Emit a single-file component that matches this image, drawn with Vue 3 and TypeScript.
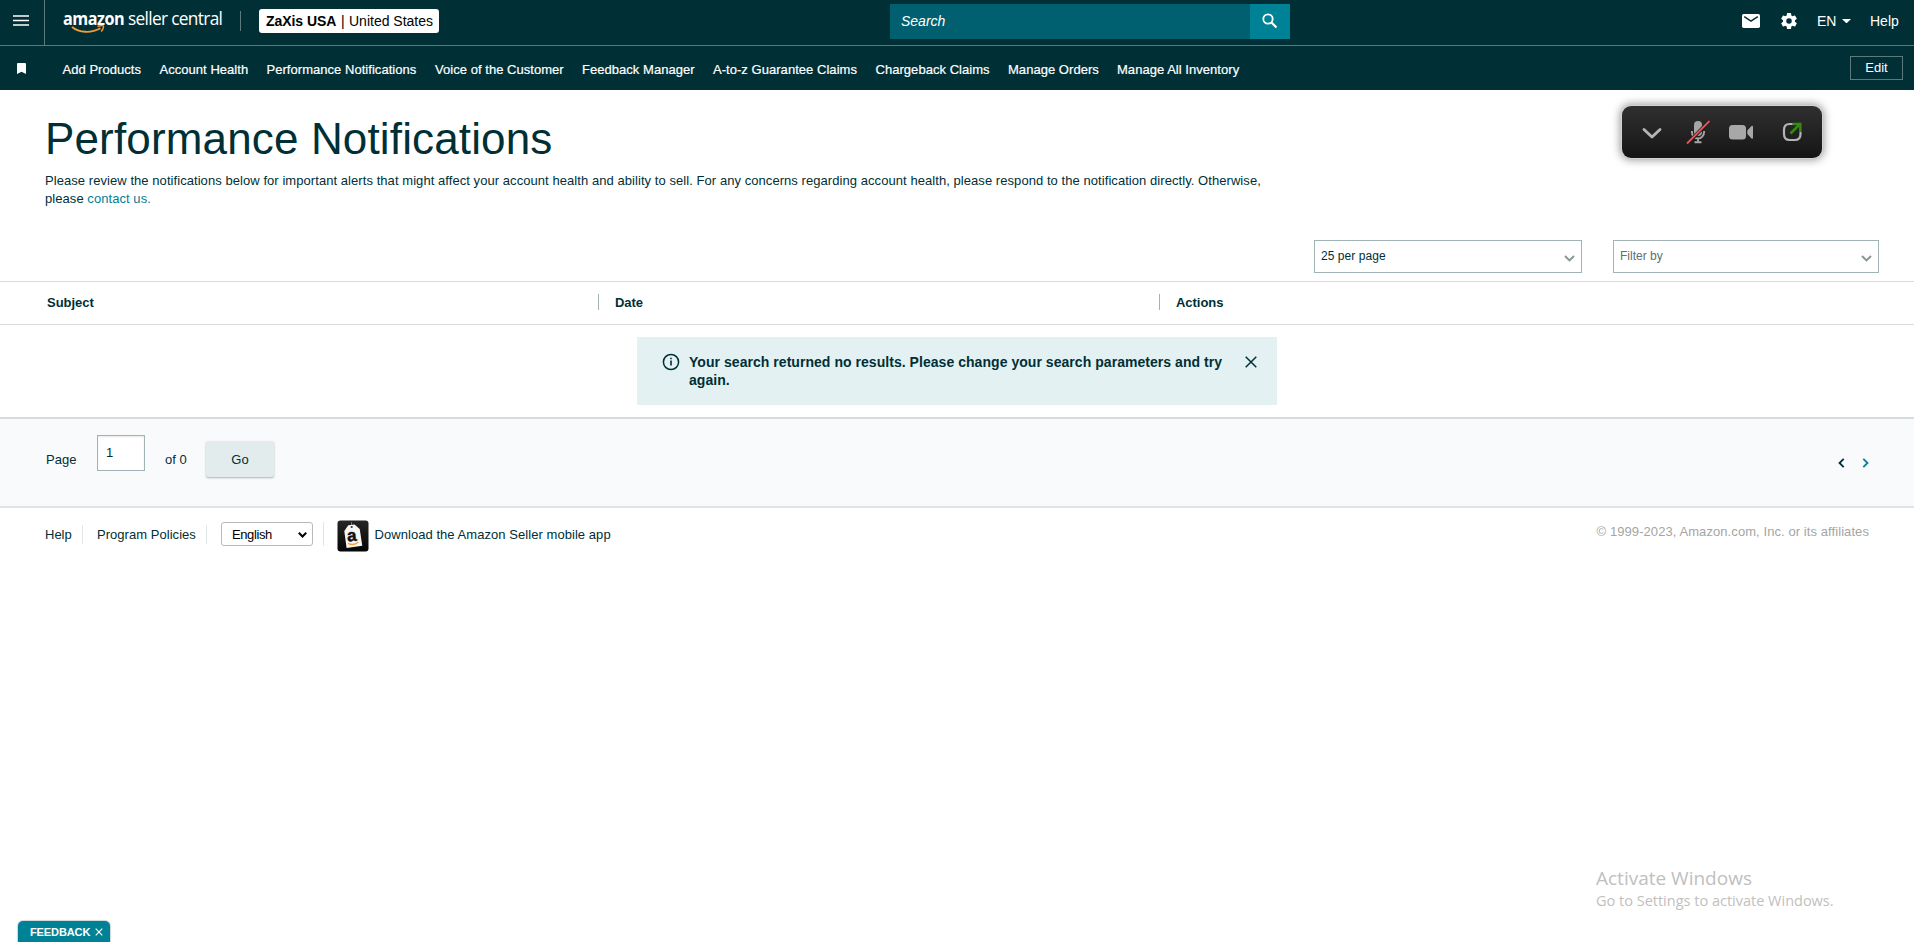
<script setup lang="ts">
import { ref } from 'vue'

interface NavLink { label: string; width: number }

const links: NavLink[] = [
  { label: 'Add Products', width: 97 },
  { label: 'Account Health', width: 107 },
  { label: 'Performance Notifications', width: 168.5 },
  { label: 'Voice of the Customer', width: 147 },
  { label: 'Feedback Manager', width: 131 },
  { label: 'A-to-z Guarantee Claims', width: 162.5 },
  { label: 'Chargeback Claims', width: 132.5 },
  { label: 'Manage Orders', width: 109 },
  { label: 'Manage All Inventory', width: 125 },
]
const page = ref('1')
const showAlert = ref(true)
</script>

<template>
  <div class="page">
    <header class="top">
      <button class="menu" aria-label="Menu">
        <svg width="16" height="11" viewBox="0 0 16 11"><path d="M0 1h16M0 5.500h16M0 10h16" stroke="#fff" stroke-width="1.700" /></svg>
      </button>
      <div class="logo">
        <span class="amazon">amazon</span><span class="seller">seller central</span>
        <svg class="smile" width="34" height="9" viewBox="0 0 34 9"><path d="M1 2C8 7.800 20 8.500 29.500 3.200" fill="none" stroke="#f79b34" stroke-width="1.800" /><path d="M26.500 1.500C29 .6 32 .4 32.400 1.200c.4.9-.8 3.800-2.200 5.200" fill="none" stroke="#f79b34" stroke-width="1.400" /></svg>
      </div>
      <i class="split"></i>
      <div class="account"><b>ZaXis USA</b><span class="bar">|</span><span>United States</span></div>
      <div class="search">
        <div class="search-field">Search</div>
        <button class="search-btn" aria-label="Search">
          <svg width="16" height="16" viewBox="0 0 16 16" fill="none" stroke="#fff"><circle cx="6" cy="6" r="4.700" stroke-width="1.800" /><path d="M9.500 9.500l5 5" stroke-width="2.200" /></svg>
        </button>
      </div>
      <div class="tools">
        <svg class="mail" width="18" height="14" viewBox="0 0 18 14"><rect width="18" height="14" rx="1.700" fill="#fff" /><path d="M2.200 2.700L9 7.200l6.800-4.500" fill="none" stroke="#002f36" stroke-width="1.500" /></svg>
        <svg class="gear" width="20" height="20" viewBox="0 0 24 24"><path fill="#fff" d="M19.14 12.94c.04-.3.06-.61.06-.94s-.02-.64-.07-.94l2.03-1.58a.49.49 0 0 0 .12-.61l-1.92-3.32a.49.49 0 0 0-.59-.22l-2.39.96a7 7 0 0 0-1.62-.94l-.36-2.54a.48.48 0 0 0-.48-.41h-3.84a.48.48 0 0 0-.47.41l-.36 2.54c-.59.24-1.13.57-1.62.94l-2.39-.96a.48.48 0 0 0-.59.22L2.74 8.87a.48.48 0 0 0 .12.61l2.03 1.58c-.05.3-.09.63-.09.94s.02.64.07.94l-2.03 1.58a.49.49 0 0 0-.12.61l1.92 3.32c.12.22.37.29.59.22l2.39-.96c.5.38 1.03.7 1.62.94l.36 2.54c.05.24.24.41.48.41h3.84c.24 0 .44-.17.47-.41l.36-2.54a6.9 6.9 0 0 0 1.62-.94l2.39.96c.22.08.47 0 .59-.22l1.92-3.32a.48.48 0 0 0-.12-.61zM12 15.300a3.300 3.300 0 1 1 0-6.600 3.300 3.300 0 0 1 0 6.600z" /></svg>
        <span class="lang">EN</span>
        <svg class="caret" width="9" height="4" viewBox="0 0 9 4"><path d="M0 0h9L4.500 4.400z" fill="#fff" /></svg>
        <span class="help">Help</span>
      </div>
    </header>

    <nav class="favs">
      <div class="flag"><svg width="9" height="11" viewBox="0 0 9 11"><path d="M0 1q0-1 1-1h7q1 0 1 1v10L4.500 8.700 0 11z" fill="#fff" /></svg></div>
      <a v-for="l in links" :key="l.label" class="fav" :style="{ width: l.width + 'px' }">{{ l.label }}</a>
      <button class="edit">Edit</button>
    </nav>

    <section class="intro">
      <h1>Performance Notifications</h1>
      <p>Please review the notifications below for important alerts that might affect your account health and ability to sell. For any concerns regarding account health, please respond to the notification directly. Otherwise,<br />please <a>contact us.</a></p>
    </section>

    <section class="filters">
      <div class="pick per"><span>25 per page</span><svg width="11" height="7" viewBox="0 0 11 7"><path d="M1 1l4.500 4.500L10 1" fill="none" stroke="#879596" stroke-width="1.900" /></svg></div>
      <div class="pick by"><span>Filter by</span><svg width="11" height="7" viewBox="0 0 11 7"><path d="M1 1l4.500 4.500L10 1" fill="none" stroke="#879596" stroke-width="1.900" /></svg></div>
    </section>

    <section class="thead">
      <div class="th subject"><span>Subject</span></div>
      <div class="th date"><span>Date</span></div>
      <div class="th actions"><span>Actions</span></div>
    </section>

    <section class="results">
      <div v-if="showAlert" class="alert">
        <svg class="info" width="18" height="18" viewBox="0 0 18 18"><circle cx="9" cy="9" r="7.600" fill="none" stroke="#002f36" stroke-width="1.500" /><path d="M9 7.600v5M9 4.700v1.600" stroke="#002f36" stroke-width="1.600" /></svg>
        <p>Your search returned no results. Please change your search parameters and try<br />again.</p>
        <button class="close" aria-label="Close" @click="showAlert = false"><svg width="12" height="12" viewBox="0 0 12 12"><path d="M.7.7l10.600 10.600M11.300.7L.7 11.300" stroke="#002f36" stroke-width="1.500" /></svg></button>
      </div>
    </section>

    <section class="pager">
      <span class="label">Page</span>
      <input v-model="page" class="num" />
      <span class="of">of 0</span>
      <button class="go">Go</button>
      <div class="arrows">
        <svg width="7" height="10" viewBox="0 0 7 10"><path d="M5.700.8L1.500 5l4.200 4.200" fill="none" stroke="#002f36" stroke-width="1.800" /></svg>
        <svg width="7" height="10" viewBox="0 0 7 10"><path d="M1.300.8L5.500 5 1.300 9.200" fill="none" stroke="#008296" stroke-width="1.800" /></svg>
      </div>
    </section>

    <footer class="foot">
      <span class="f-help">Help</span>
      <i class="rule"></i>
      <span class="f-pol">Program Policies</span>
      <i class="rule"></i>
      <div class="langsel"><span>English</span><svg width="9" height="6" viewBox="0 0 9 6"><path d="M.8.8l3.700 3.700L8.200.8" fill="none" stroke="#000" stroke-width="2" /></svg></div>
      <i class="rule tall"></i>
      <svg class="app" width="32" height="32" viewBox="0 0 32 32">
        <defs><linearGradient id="appbg" x1="0" y1="0" x2="0" y2="1"><stop offset="0" stop-color="#262626" /><stop offset="1" stop-color="#050505" /></linearGradient></defs>
        <rect x=".5" y=".5" width="31" height="31" rx="3" fill="url(#appbg)" />
        <path d="M14.500 2v4" stroke="#888" stroke-width=".8" />
        <path d="M7.300 11l4-5.700 6.200-.8 5.200 4.600 2.600 16.700L9.600 28z" fill="#f7f7f5" />
        <circle cx="14.700" cy="7" r="1.100" fill="#333" />
        <text x="10.200" y="21.200" font-family="Liberation Sans, Arial, sans-serif" font-weight="700" font-size="17" fill="#111" stroke="#111" stroke-width=".5" transform="rotate(-5 15 18)">a</text>
        <path d="M11 23.300c4 2 7.500 1.300 10.400-1.300" fill="none" stroke="#f7a030" stroke-width="1.300" />
      </svg>
      <span class="f-app">Download the Amazon Seller mobile app</span>
      <span class="copy">© 1999-2023, Amazon.com, Inc. or its affiliates</span>
    </footer>

    <div class="call">
      <svg width="200" height="52" viewBox="0 0 200 52" fill="none">
        <path d="M22 23.500l8 7.500 8-7.500" stroke="#b4b4b4" stroke-width="2.900" stroke-linecap="round" stroke-linejoin="round" />
        <rect x="72" y="15" width="8" height="15" rx="4" fill="#a5a5a5" />
        <path d="M69.800 25c0 10 12.400 10 12.400 0M76 32v4M72.500 36.200h7" stroke="#a5a5a5" stroke-width="1.900" />
        <path d="M65.500 37.500L87.500 15" stroke="#1c1c1d" stroke-width="3.600" />
        <path d="M65 37.500L87.500 15" stroke="#e85457" stroke-width="1.800" />
        <rect x="107" y="19" width="17" height="14.500" rx="3.500" fill="#a8a8a8" />
        <path d="M125.300 24.500l4.200-4.500q1.500-.8 1.500 1v10.500q0 1.800-1.500 1l-4.200-4.500z" fill="#a8a8a8" />
        <path d="M170 18h-2.500q-5.500 0-5.500 6v4q0 6 5.500 6h5.500q5.500 0 5.500-6v-1.500" stroke="#b4b4b4" stroke-width="2.200" stroke-linecap="round" />
        <path d="M168.500 27.500l9.500-9.500M170.500 18h7.800v7.800" stroke="#348c10" stroke-width="2.500" />
      </svg>
    </div>
    <div class="feedback">FEEDBACK<svg width="8" height="8" viewBox="0 0 8 8"><path d="M.7.7l6.600 6.600M7.300.7L.7 7.300" stroke="#fff" stroke-width="1.200" /></svg></div>
    <div class="activate"><div class="a1">Activate Windows</div><div class="a2">Go to Settings to activate Windows.</div></div>
  </div>
</template>

<style>
body { margin: 0; overflow: hidden; background: #fff; }
</style>

<style scoped>
.page { position: relative; width: 1914px; height: 942px; overflow: hidden; font: 13px/18px "Liberation Sans", Arial, sans-serif; color: #002f36; background: #fff; }
.page * { box-sizing: border-box; }
button { font: inherit; color: inherit; border: 0; padding: 0; background: none; }
svg { display: block; flex: none; }
p, h1 { margin: 0; font-weight: 400; }
span, a, .th { white-space: nowrap; }

.top { display: flex; height: 46px; background: #002f36; border-bottom: 1px solid #5c7a7c; color: #fff; font-size: 14px; line-height: 18px; }
.menu { display: flex; align-items: flex-start; width: 45px; height: 45px; border-right: 1px solid #5c7a7c; padding: 15px 0 0 13px; flex: none; }
.logo { position: relative; width: 195px; padding: 6px 0 0 18px; display: flex; font: 18px/24px "Open Sans", sans-serif; flex: none; }
.amazon { width: 65px; font-weight: 700; letter-spacing: -.55px; transform: scaleX(.9); transform-origin: 0 0; }
.seller { letter-spacing: -.7px; transform: scaleX(.96); transform-origin: 0 0; }
.smile { position: absolute; left: 26px; top: 25px; }
.split { width: 1px; height: 20px; margin-top: 11px; background: #5c7a7c; flex: none; }
.account { width: 180px; height: 24px; margin: 9px 0 0 18px; padding: 3px 0 0 7px; display: flex; background: #fff; color: #000; border-radius: 3px; flex: none; }
.account b { width: 75px; letter-spacing: -.05px; }
.bar { width: 8px; }
.search { display: flex; width: 400px; height: 35px; margin: 4px 0 0 451px; flex: none; }
.search-field { width: 360px; padding: 8px 11px; background: #00606f; font-style: italic; }
.search-btn { display: flex; align-items: flex-start; width: 40px; padding: 9px 0 0 12px; background: #008296; }
.tools { display: flex; flex: 1; padding: 12px 15px 0 452px; }
.mail { margin-top: 2px; }
.gear { margin: -1px 0 0 19px; }
.lang { margin-left: 18px; width: 25px; }
.caret { margin-top: 7px; }
.help { margin-left: 19px; }

.favs { display: flex; height: 44px; background: #002f36; color: #fff; }
.flag { width: 62.500px; padding: 17px 0 0 16.500px; flex: none; }
.fav { padding-top: 15px; flex: none; letter-spacing: .04px; -webkit-text-stroke: .2px #fff; }
.edit { width: 53px; height: 24px; margin: 10px 11px 0 auto; border: 1px solid #5c7a7c; line-height: 22px; }

.intro { height: 141px; padding: 23px 0 0 45px; }
h1 { font-size: 44px; line-height: 52px; letter-spacing: .15px; white-space: nowrap; }
.intro p { margin-top: 7px; white-space: nowrap; letter-spacing: .061px; }
.intro p a { color: #008296; }

.filters { display: flex; gap: 31px; height: 50px; padding: 9px 0 0 1314px; }
.pick { display: flex; justify-content: space-between; height: 33px; border: 1px solid #a2b3b5; padding: 6px 6px 0 6px; font-size: 12px; }
.pick svg { margin-top: 8px; }
.per { width: 268px; letter-spacing: .06px; }
.by { width: 266px; color: #5c7073; }

.thead { display: flex; height: 44px; border-top: 1px solid #d5dbdb; border-bottom: 1px solid #d5dbdb; font-weight: 700; padding: 12px 0 0 47px; }
.th { height: 16px; line-height: 18px; letter-spacing: -.04px; }
.subject { width: 551px; }
.date { width: 561px; border-left: 1px solid #a2b3b5; padding-left: 16px; }
.actions { border-left: 1px solid #a2b3b5; padding-left: 16px; }

.results { height: 92px; padding: 12px 0 0 637px; }
.alert { display: flex; width: 640px; height: 68px; background: #e4f1f3; padding: 16px 0 0 25px; font-size: 14px; }
.alert p { width: 565px; padding-left: 9px; font-weight: 700; white-space: nowrap; letter-spacing: .045px; }
.close { height: 12px; margin: 3px 0 0 0; }

.pager { display: flex; height: 91px; background: #f9fafc; border-top: 2px solid #d7dcde; border-bottom: 2px solid #dfe4e8; padding-left: 46px; }
.label { width: 51px; margin-top: 32px; }
.num { width: 48px; height: 36px; margin: 16px 20px 0 0; border: 1px solid #a2b3b5; background: #fff; padding: 0 0 2px 8px; font: inherit; color: #002f36; border-radius: 0; box-shadow: inset 0 1px 2px #e5e8ea; }
.of { width: 41px; margin-top: 32px; }
.go { width: 68px; height: 36px; margin-top: 22px; background: #e3eced; border-radius: 2px; box-shadow: 0 1px 2px #aab4b6; line-height: 35px; }
.arrows { display: flex; gap: 17px; margin: 39px 45px 0 auto; }

.foot { display: flex; height: 60px; padding: 0 45px; }
.f-help { width: 37px; margin-top: 18px; }
.rule { width: 1px; height: 19px; margin-top: 17px; background: #e2e5e6; flex: none; }
.tall { height: 24px; margin-top: 14px; }
.f-pol { width: 109px; margin: 18px 0 0 14px; letter-spacing: .04px; }
.langsel { display: flex; justify-content: space-between; width: 92px; height: 24px; margin: 14px 10px 0 14px; border: 1px solid #b9b9b9; border-radius: 3px; padding: 3px 5px 0 10px; color: #000; letter-spacing: -.4px; }
.langsel svg { margin-top: 6px; }
.app { margin: 12px 5.500px 0 13px; }
.f-app { margin-top: 18px; letter-spacing: .055px; }
.copy { margin: 15px 0 0 auto; color: #a5a5a5; letter-spacing: .078px; }

.call { position: absolute; left: 1622px; top: 106px; width: 200px; height: 52px; border-radius: 9px; background: linear-gradient(#303031, #151516); box-shadow: 0 0 0 1px #d2d2d2, 0 0 9px 2px rgba(0, 0, 0, .4); }
.feedback { position: absolute; left: 18px; bottom: 0; width: 92px; height: 21px; display: flex; gap: 5px; padding: 2px 0 0 12px; background: #008296; color: #fff; border-radius: 5px 5px 0 0; font-size: 11px; font-weight: 700; letter-spacing: -.1px; box-shadow: 0 0 1px 1px #ccd8da; }
.feedback svg { margin-top: 5px; }
.activate { position: absolute; left: 1596px; top: 865px; font-family: "Open Sans", sans-serif; color: #c0c0c0; white-space: nowrap; }
.a1 { font-size: 19px; line-height: 26px; }
.a2 { font-size: 14.500px; line-height: 20px; }
</style>
